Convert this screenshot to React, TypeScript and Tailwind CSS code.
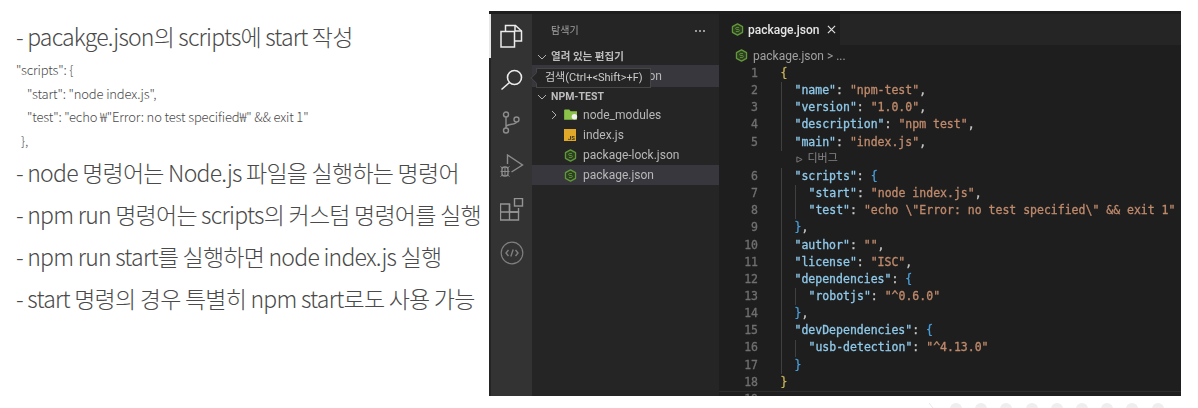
import React from "react";

const uiFont = "font-['Roboto','Noto_Sans_CJK_KR',sans-serif]";

const NodeIcon = ({ className = "" }: { className?: string }) => (
  <svg viewBox="0 0 16 16" className={className} fill="none">
    <path d="M8 1 14.2 4.5v7L8 15 1.8 11.5v-7z" fill="#2c3f20" stroke="#62983c" strokeWidth="1.6" strokeLinejoin="round" />
    <path d="M9.8 5.5H7a1.2 1.2 0 0 0 0 2.5h2a1.2 1.2 0 0 1 0 2.5H6" stroke="#62983c" strokeWidth="1.1" />
  </svg>
);

const JsIcon = () => (
  <span className="w-[12px] h-[12px] bg-[#e0a82a] flex items-end justify-end pr-[1px] text-[6px] leading-[7px] text-[#3a2f10] font-bold">
    JS
  </span>
);

const FolderIcon = () => (
  <svg viewBox="0 0 16 14" className="w-[14px] h-[12px]">
    <path d="M0 1.5a1 1 0 0 1 1-1h5l1.5 2H15v10H0z" fill="#8bc34a" />
    <circle cx="12" cy="9" r="3.2" fill="#f1f1f1" />
  </svg>
);

const FilesIcon = () => (
  <svg viewBox="0 0 24 24" className="w-[24px] h-[24px]" fill="none" stroke="#ececec" strokeWidth="1.5">
    <path d="M5.5 7V1.5h10l6 5.5v10h-7" />
    <path d="M15 1.5V7h6.5" />
    <path d="M1 7.5h13.5V23H1z" />
  </svg>
);

const SearchIcon = () => (
  <svg viewBox="0 0 24 24" className="w-[24px] h-[24px]" fill="none" stroke="#ececec" strokeWidth="1.6">
    <circle cx="14.5" cy="9.5" r="7" />
    <path d="M9.5 14.5 1.5 21.5" />
  </svg>
);

const BranchIcon = () => (
  <svg viewBox="0 0 24 24" className="w-[24px] h-[24px]" fill="none" stroke="#8c8c8c" strokeWidth="1.4">
    <circle cx="6" cy="3.5" r="2.5" />
    <circle cx="6" cy="19.5" r="2.5" />
    <circle cx="16.5" cy="8.5" r="2.5" />
    <path d="M6 6v11M16.5 11c0 3-10.5 1.5-10.5 5" />
  </svg>
);

const DebugIcon = () => (
  <svg viewBox="0 0 24 24" className="w-[24px] h-[24px]" fill="none" stroke="#8c8c8c" strokeWidth="1.4">
    <path d="M7.5 10V1L22.5 11 11.5 18" />
    <rect x="2" y="13" width="6" height="9" rx="2.5" />
    <path d="M.5 17.5h9M5 13v9M.5 12.5 3 14.5M9.5 12.5 7 14.5M.5 22.5 3 20.5M9.5 22.5 7 20.5" strokeWidth="1" />
  </svg>
);

const ExtensionsIcon = () => (
  <svg viewBox="0 0 24 24" className="w-[24px] h-[24px]" fill="none" stroke="#959595" strokeWidth="1.4">
    <path d="M.5 6h9v16h-9zM.5 14h18v8h-9" />
    <path d="M9.5 6v8h9V10" />
    <rect x="14.5" y="0.5" width="8" height="7.5" />
  </svg>
);

const RemoteIcon = () => (
  <svg viewBox="0 0 24 24" className="w-[24px] h-[24px]" fill="none" stroke="#7f7f7f" strokeWidth="1.2">
    <circle cx="12" cy="12" r="10.8" />
    <path d="M8.5 9 6 12l2.5 3M15.5 9l2.5 3-2.5 3M13.2 8.5l-2.4 7" strokeWidth="1.4" />
  </svg>
);

type Tok = { t: string; c: "k" | "s" | "p" | "b" | "y" };
type Line = { n?: number; indent: number; toks: Tok[]; debug?: boolean };

const tokColor: Record<Tok["c"], string> = {
  k: "text-[#8fc9ea]",
  s: "text-[#c08a6c]",
  p: "text-[#c8c8c8]",
  b: "text-[#4a9fd8]",
  y: "text-[#c9b458]",
};

const kv = (k: string, v: string, comma = true): Tok[] => [
  { t: `"${k}"`, c: "k" },
  { t: ": ", c: "p" },
  { t: `"${v}"`, c: "s" },
  ...(comma ? [{ t: ",", c: "p" } as Tok] : []),
];

const open = (k: string, c: Tok["c"] = "b"): Tok[] => [
  { t: `"${k}"`, c: "k" },
  { t: ": ", c: "p" },
  { t: "{", c },
];

const close = (comma = true, c: Tok["c"] = "b"): Tok[] => [
  { t: "}", c },
  ...(comma ? [{ t: ",", c: "p" } as Tok] : []),
];

const lines: Line[] = [
  { n: 1, indent: 0, toks: [{ t: "{", c: "y" }] },
  { n: 2, indent: 1, toks: kv("name", "npm-test") },
  { n: 3, indent: 1, toks: kv("version", "1.0.0") },
  { n: 4, indent: 1, toks: kv("description", "npm test") },
  { n: 5, indent: 1, toks: kv("main", "index.js") },
  { indent: 0, toks: [], debug: true },
  { n: 6, indent: 1, toks: open("scripts") },
  { n: 7, indent: 2, toks: kv("start", "node index.js") },
  { n: 8, indent: 2, toks: kv("test", 'echo \\"Error: no test specified\\" && exit 1', false) },
  { n: 9, indent: 1, toks: close() },
  { n: 10, indent: 1, toks: kv("author", "") },
  { n: 11, indent: 1, toks: kv("license", "ISC") },
  { n: 12, indent: 1, toks: open("dependencies") },
  { n: 13, indent: 2, toks: kv("robotjs", "^0.6.0", false) },
  { n: 14, indent: 1, toks: close() },
  { n: 15, indent: 1, toks: open("devDependencies") },
  { n: 16, indent: 2, toks: kv("usb-detection", "^4.13.0", false) },
  { n: 17, indent: 1, toks: close(false) },
  { n: 18, indent: 0, toks: [{ t: "}", c: "y" }] },
];

const CodeLine = ({ line }: { line: Line }) => (
  <div className="flex h-[17.17px] items-center">
    <span className="w-[39px] shrink-0 text-right text-[#707070]">{line.n}</span>
    <span className="w-[22.5px] shrink-0" />
    {line.debug ? (
      <span className={`pl-[15px] flex items-center gap-[5px] text-[11px] font-normal text-[#858585] [-webkit-text-stroke:0px] ${uiFont}`}>
        <svg viewBox="0 0 8 8" className="w-[7px] h-[7px]" fill="none" stroke="#858585" strokeWidth="1">
          <path d="M1 1 7 4 1 7z" />
        </svg>
        디버그
      </span>
    ) : (
      <span className="flex self-stretch items-center whitespace-pre">
        {Array.from({ length: line.indent }).map((_, i) => (
          <span key={i} className="w-[14px] self-stretch border-l border-[#404040]" />
        ))}
        {line.toks.map((tok, i) => (
          <span key={i} className={tokColor[tok.c]}>
            {tok.t}
          </span>
        ))}
      </span>
    )}
  </div>
);

const Row = ({
  children,
  active = false,
  className = "",
}: {
  children: React.ReactNode;
  active?: boolean;
  className?: string;
}) => (
  <div className={`flex h-[20px] items-center text-[#b8b8b8] ${active ? "bg-[#37373d]" : ""} ${className}`}>
    {children}
  </div>
);

const Chevron = ({ dir }: { dir: "down" | "right" }) => (
  <svg viewBox="0 0 10 10" className="w-[10px] h-[10px]" fill="none" stroke="#b0b0b0" strokeWidth="1">
    <path d={dir === "down" ? "M1 3l4 4 4-4" : "M3 1l4 4-4 4"} />
  </svg>
);

const Bullet = ({ children }: { children: React.ReactNode }) => (
  <p className="h-[41.8px] flex items-center whitespace-nowrap text-[23px] font-light tracking-[-0.75px] text-[#4a4a4a]">
    {children}
  </p>
);

const Snippet = ({ children, className = "" }: { children: React.ReactNode; className?: string }) => (
  <p className={`h-[23.7px] flex items-center whitespace-pre text-[13px] font-light tracking-[-0.15px] text-[#4a4a4a] ${className}`}>
    {children}
  </p>
);

export default function App() {
  return (
    <div className="flex w-[1198px] h-[408px] overflow-hidden bg-white font-['Noto_Sans_CJK_KR','Noto_Sans',sans-serif]">
      <div className="w-[489px] shrink-0 pl-[16px] pt-[15px]">
        <p className="h-[42px] flex items-center whitespace-nowrap text-[23px] font-light tracking-[-0.8px] text-[#4a4a4a]">
          - pacakge.json의 scripts에 start 작성
        </p>
        <div className="pt-[1px]">
          <Snippet>"scripts": {"{"}</Snippet>
          <Snippet className="pl-[11px]">"start": "node index.js",</Snippet>
          <Snippet className="pl-[11px]">"test": "echo ₩"Error: no test specified₩" && exit 1"</Snippet>
          <Snippet className="pl-[5px]">{"},"}</Snippet>
        </div>
        <div className="-mt-[1px]">
          <Bullet>- node 명령어는 Node.js 파일을 실행하는 명령어</Bullet>
          <Bullet>- npm run 명령어는 scripts의 커스텀 명령어를 실행</Bullet>
          <Bullet>- npm run start를 실행하면 node index.js 실행</Bullet>
          <Bullet>- start 명령의 경우 특별히 npm start로도 사용 가능</Bullet>
        </div>
      </div>

      <div className="flex-1 flex flex-col">
        <div className="relative mt-[11px] w-[692px] h-[385px] shrink-0 flex overflow-hidden bg-[#1e1e1e] pt-[3px] blur-[0.35px]">
          <div className="w-[43px] shrink-0 flex flex-col items-center bg-[#333333] border-l-2 border-[#242424]">
            <div className="h-[44px] w-[43px] -ml-[2px] flex items-center justify-center border-l-2 border-[#e8e8e8]">
              <FilesIcon />
            </div>
            <div className="h-[43px] flex items-center justify-center">
              <SearchIcon />
            </div>
            <div className="h-[43px] flex items-center justify-center">
              <BranchIcon />
            </div>
            <div className="h-[44px] flex items-center justify-center">
              <DebugIcon />
            </div>
            <div className="h-[43px] flex items-center justify-center">
              <ExtensionsIcon />
            </div>
            <div className="h-[43px] flex items-center justify-center">
              <RemoteIcon />
            </div>
          </div>

          <div className={`w-[187px] shrink-0 bg-[#252526] text-[12px] ${uiFont}`}>
            <div className="h-[31px] flex items-center justify-between pl-[19px] pr-[14px] pt-[2px] text-[10px] text-[#a0a0a0]">
              <span>탐색기</span>
              <span className="flex gap-[2px]">
                <span className="w-[2px] h-[2px] bg-[#c0c0c0] rounded-full" />
                <span className="w-[2px] h-[2px] bg-[#c0c0c0] rounded-full" />
                <span className="w-[2px] h-[2px] bg-[#c0c0c0] rounded-full" />
              </span>
            </div>
            <div className="h-[20px] flex items-center gap-[4px] pl-[5px] pt-[3px] text-[10.5px] font-bold text-[#bdbdbd]">
              <Chevron dir="down" />
              열려 있는 편집기
            </div>
            <Row active className="h-[22px] pl-[40px]">
              <NodeIcon className="w-[13px] h-[13px] mr-[6px]" />
              package.json
            </Row>
            <div className="h-[18px] flex items-center gap-[4px] pl-[5px] pt-[2px] text-[10.5px] font-bold text-[#bdbdbd]">
              <Chevron dir="down" />
              NPM-TEST
            </div>
            <Row className="pl-[17px]">
              <span className="mr-[5px] flex">
                <Chevron dir="right" />
              </span>
              <span className="mr-[5px] flex">
                <FolderIcon />
              </span>
              node_modules
            </Row>
            <Row className="pl-[32px]">
              <span className="mr-[7px] flex">
                <JsIcon />
              </span>
              index.js
            </Row>
            <Row className="pl-[32px]">
              <NodeIcon className="w-[13px] h-[13px] mr-[6px]" />
              package-lock.json
            </Row>
            <Row active className="pl-[32px]">
              <NodeIcon className="w-[13px] h-[13px] mr-[6px]" />
              package.json
            </Row>
          </div>

          <div className="flex-1 min-w-0 bg-[#1e1e1e]">
            <div className={`h-[31px] flex bg-[#252526] text-[12px] font-medium text-[#e6e6e6] ${uiFont}`}>
              <div className="w-[121px] bg-[#1e1e1e] flex items-center pl-[12px]">
                <NodeIcon className="w-[13px] h-[13px] mr-[4px]" />
                package.json
                <svg viewBox="0 0 10 10" className="ml-[8px] w-[9px] h-[9px]" fill="none" stroke="#e0e0e0" strokeWidth="1.3">
                  <path d="M1 1l8 8M9 1 1 9" />
                </svg>
              </div>
            </div>
            <div className={`h-[20px] flex items-center pl-[16px] pt-[1px] text-[12px] text-[#a0a0a0] ${uiFont}`}>
              <NodeIcon className="w-[13px] h-[13px] mr-[5px]" />
              package.json &gt; ...
            </div>
            <div className="font-['DejaVu_Sans_Mono',monospace] text-[11.5px] [-webkit-text-stroke:0.3px]">
              {lines.map((line, i) => (
                <CodeLine key={i} line={line} />
              ))}
              <div className="flex h-[17.17px] items-center border-t border-[#2c2c2c]">
                <span className="w-[39px] shrink-0 text-right text-[#707070]">19</span>
              </div>
            </div>
          </div>

          <div className={`absolute left-[47px] top-[57px] h-[20px] w-[115px] flex items-center pl-[8px] bg-[#252526] border border-[#454545] text-[11px] text-[#cccccc] whitespace-nowrap ${uiFont}`}>
            검색(Ctrl+&lt;Shift&gt;+F)
            <span className="absolute left-[-5px] top-[5px] w-[8px] h-[8px] rotate-45 bg-[#252526] border-l border-b border-[#454545]" />
          </div>
        </div>

        <div className="mt-[7px] flex items-start pl-[439px]">
          <svg viewBox="0 0 6 10" className="w-[6px] h-[10px] mr-[16px]" fill="none" stroke="#e8e8e8" strokeWidth="1">
            <path d="M1 0l4 5-4 5" />
          </svg>
          <div className="flex gap-[13.2px]">
            {Array.from({ length: 9 }).map((_, i) => (
              <span key={i} className="w-[12px] h-[12px] shrink-0 rounded-full bg-[#eeeeee]" />
            ))}
          </div>
        </div>
      </div>
    </div>
  );
}
